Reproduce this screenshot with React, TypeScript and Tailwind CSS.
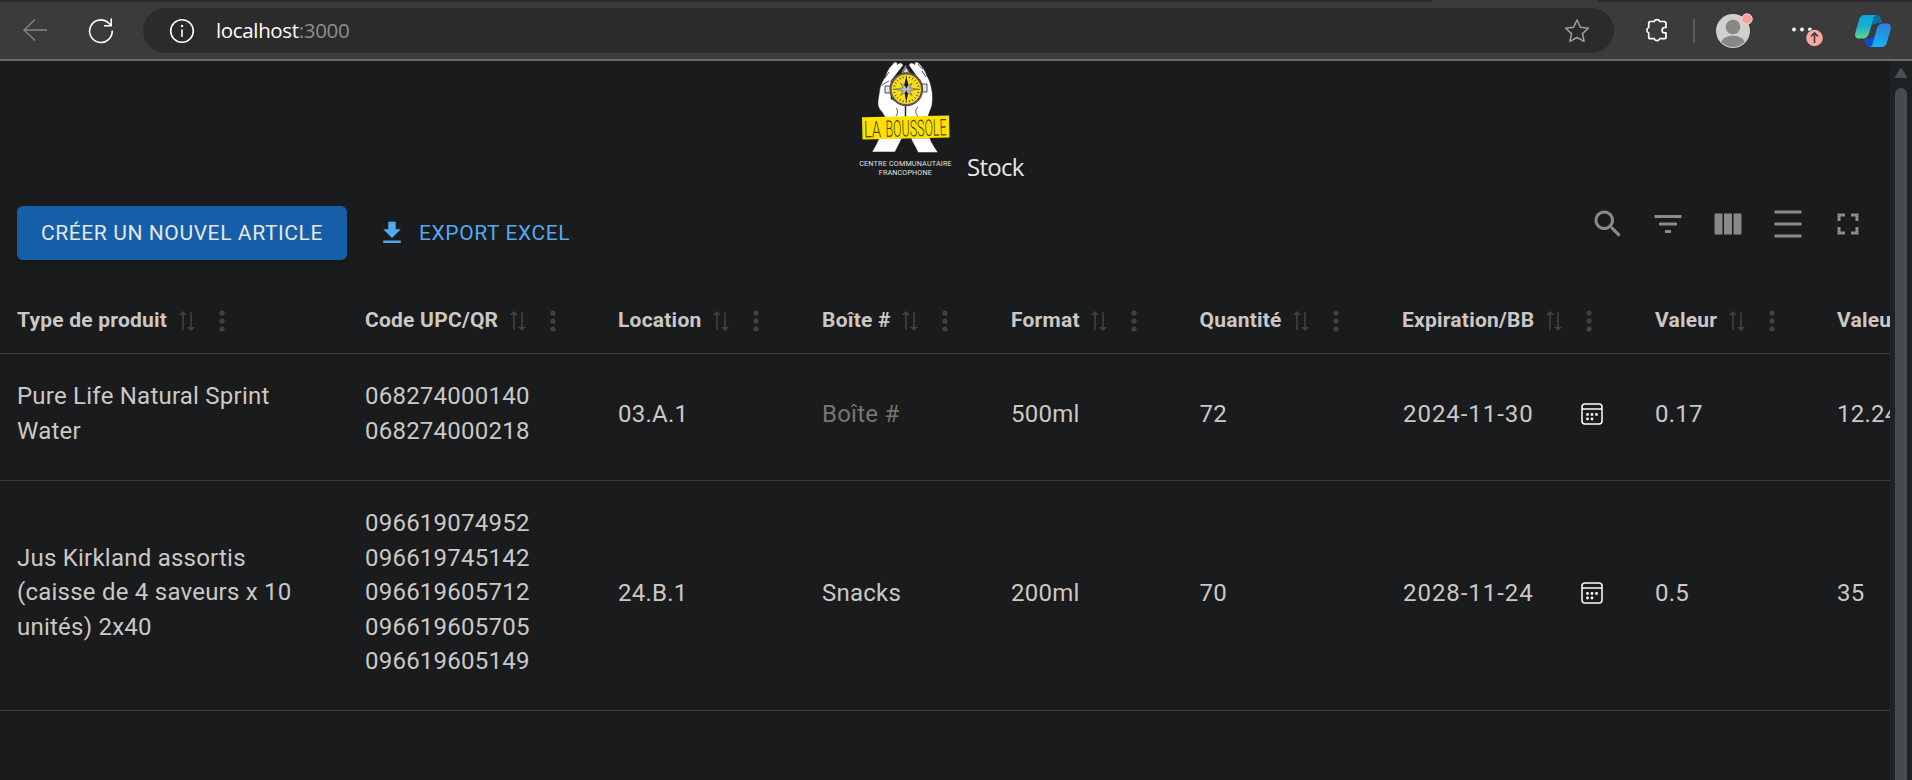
import React from "react";

const COLS =
  "grid grid-cols-[348px_253px_204px_189px_188.5px_202.5px_253px_182px_200px]";

const headers = [
  "Type de produit",
  "Code UPC/QR",
  "Location",
  "Boîte #",
  "Format",
  "Quantité",
  "Expiration/BB",
  "Valeur",
  "Valeur totale",
];

type Item = {
  product: string;
  codes: string[];
  location: string;
  box: string;
  format: string;
  quantity: string;
  expiration: string;
  value: string;
  total: string;
};

const items: Item[] = [
  {
    product: "Pure Life Natural Sprint Water",
    codes: ["068274000140", "068274000218"],
    location: "03.A.1",
    box: "",
    format: "500ml",
    quantity: "72",
    expiration: "2024-11-30",
    value: "0.17",
    total: "12.24",
  },
  {
    product: "Jus Kirkland assortis (caisse de 4 saveurs x 10 unités) 2x40",
    codes: [
      "096619074952",
      "096619745142",
      "096619605712",
      "096619605705",
      "096619605149",
    ],
    location: "24.B.1",
    box: "Snacks",
    format: "200ml",
    quantity: "70",
    expiration: "2028-11-24",
    value: "0.5",
    total: "35",
  },
];

function MuiIcon({ d, className }: { d: string; className: string }) {
  return (
    <svg viewBox="0 0 24 24" fill="currentColor" className={className}>
      <path d={d} />
    </svg>
  );
}

function BrowserBar() {
  return (
    <div className="h-[61px] shrink-0 border-b-2 border-[#6b6b6b] bg-[#3b3b3b]">
      <div className="flex h-[2px] justify-between">
        <div className="w-[1432px] bg-[#292929]" />
        <div className="w-[315px] bg-[#292929]" />
      </div>
      <div className="flex h-[57px] items-center">
        <svg viewBox="0 0 24 24" className="mb-[2px] ml-[23px] size-6 shrink-0" fill="none" stroke="#858585" strokeWidth="1.4">
          <path d="M24 12H.8M12 1.500 1 12l11 10.500" />
        </svg>
        <svg viewBox="0 0 26 26" className="ml-[41px] size-[26px] shrink-0" fill="none" stroke="#fff" strokeWidth="1.6">
          <path d="M24.2 12.5A11.3 11.3 0 1 1 19.5 4L23 7.4" />
          <path d="M23.2.5v7.2H16" />
        </svg>
        <div className="ml-[29px] flex h-[45px] w-[1471px] shrink-0 items-center rounded-full bg-[#2b2b2b]">
          <svg viewBox="0 0 26 26" className="ml-[26px] size-[26px] shrink-0" fill="none" stroke="#fff" strokeWidth="1.6">
            <circle cx="13" cy="13" r="11.3" />
            <path d="M13 11.5v7.5" />
            <circle cx="13" cy="8" r="1.2" fill="#fff" stroke="none" />
          </svg>
          <span className="mb-[2px] ml-[21px] font-['Open_Sans',sans-serif] text-[20.500px] leading-[30px] tracking-[-0.350px] text-white">
            localhost<span className="text-[#8e8e8e]">:3000</span>
          </span>
          <svg viewBox="0 0 26 26" className="mr-6 ml-auto size-[26px] shrink-0" fill="none" stroke="#a0a0a0" strokeWidth="1.5" strokeLinejoin="round">
            <path d="m13 2 3.4 7.2 8 1-5.9 5.4 1.6 7.8-7.1-3.9-7.1 3.9 1.6-7.8L1.6 10.200l8-1z" />
          </svg>
        </div>
        <svg viewBox="0 0 26 26" className="mb-px ml-[30px] size-[26px] shrink-0" fill="none" stroke="#fff" strokeWidth="1.700" strokeLinejoin="round">
          <path d="M6.500 4.500h3.700a3 3 0 0 1 5.600 0h4.400A1.800 1.800 0 0 1 22 6.300v4.200h-1.200a2.700 2.700 0 0 0 0 5.400H22v4a1.800 1.800 0 0 1-1.800 1.800h-4.400a3 3 0 0 1-5.600 0H6.500a1.800 1.800 0 0 1-1.800-1.800v-3.900a3 3 0 0 1 0-5.500V6.300a1.800 1.800 0 0 1 1.800-1.800z" />
        </svg>
        <div className="ml-[23px] h-6 w-[2px] shrink-0 bg-[#5c5c5c]" />
        <svg viewBox="0 0 40 38" className="ml-[20px] h-[38px] w-10 shrink-0">
          <defs>
            <clipPath id="avatar">
              <circle cx="18" cy="19" r="16" />
            </clipPath>
          </defs>
          <circle cx="18" cy="19" r="17" fill="#d2d0ce" />
          <g clipPath="url(#avatar)" fill="#8a8886">
            <circle cx="18" cy="15" r="7.300" />
            <ellipse cx="18" cy="33" rx="12.500" ry="9.500" />
          </g>
          <circle cx="32" cy="7" r="5.200" fill="#ff9e96" stroke="#e4e0de" strokeWidth="1" />
        </svg>
        <svg viewBox="0 0 34 30" className="mt-[3px] ml-[35px] h-[30px] w-[34px] shrink-0">
          <g fill="#fff">
            <circle cx="4" cy="12.500" r="1.900" />
            <circle cx="12" cy="12.500" r="1.900" />
            <circle cx="20" cy="12.500" r="1.900" />
          </g>
          <circle cx="24.500" cy="21" r="9" fill="#3b3b3b" />
          <circle cx="24.500" cy="21" r="8.300" fill="#f8a9a4" />
          <path d="M24.500 26v-9.500M21 19.500l3.500-3.500 3.500 3.500" fill="none" stroke="#3b3b3b" strokeWidth="1.600" />
        </svg>
        <svg viewBox="0 0 36 32" className="ml-[31px] h-8 w-9 shrink-0">
          <defs>
            <linearGradient id="cpA" x1="0" y1="0" x2="0" y2="1">
              <stop offset="0" stopColor="#0aa5e0" />
              <stop offset=".5" stopColor="#1bb0cc" />
              <stop offset="1" stopColor="#5fd98c" />
            </linearGradient>
            <linearGradient id="cpB" x1=".6" y1="0" x2=".4" y2="1">
              <stop offset="0" stopColor="#2f80e0" />
              <stop offset="1" stopColor="#16b3f5" />
            </linearGradient>
          </defs>
          <path d="M16 0h6c2.200 0 3.300 1.500 3.900 3.500L27 8h-5l-7 3z" fill="#0b6e9e" />
          <path d="M20 32h-5.500c-2.200 0-3.300-1.500-3.900-3.500L9 23.500h5l7-3z" fill="#1746d1" />
          <path d="M9.500 0H22c-2 0-3.200 1.500-3.800 3.500L14.500 17c-1.200 4-2.800 6.500-7 6.500H4c-3.500 0-4.600-2.500-3.600-6L4 5c1-3.500 2.500-5 5.500-5z" fill="url(#cpA)" />
          <path d="M26.500 32H14c2 0 3.200-1.500 3.800-3.500L21.500 15c1.200-4 2.800-6.500 7-6.500H32c3.500 0 4.600 2.500 3.600 6L32 27c-1 3.500-2.500 5-5.500 5z" fill="url(#cpB)" />
        </svg>
      </div>
    </div>
  );
}

const TICKS = [0, 15, 30, 45, 60, 75, 90, 105, 120, 135, 150, 165];

function Logo() {
  return (
    <svg viewBox="0 0 96 118" className="h-[118px] w-24">
      <g fill="#fff" stroke="#1a1b1c" strokeWidth=".5" strokeLinejoin="round">
        <path d="M36 1.500c2-1.500 4 0 3 2l1-.5c2-2 5-1 5 1.500L33 20v18l14 6v14H27c0-6-6-8-7-14-.5-5 1-9 1.500-14C22 24 25 20 27 16c2-6 5-11 9-14.500z" />
        <path d="M60 1.500c-2-1.500-4 0-3 2l-1-.5c-2-2-5-1-5 1.500L62 20v18l-14 6v14h22c0-6 3-9 4-14 .5-5 1-9 0-14-1-7-3-12-5-15-2-6-5-10-9-13.500z" />
        <path d="M21 77h23l-7 14H14c1-2 6-10 7-14z" />
        <path d="M53 77h19c1 5 6 11 8 14.500H60C58 86 54 81 53 77z" />
      </g>
      <g fill="none" stroke="#2a2a2a" strokeWidth=".8">
        <path d="M47.500 44v14M38 47c2 2 2 5 0 8M60 46c-3 3-3 6 0 9M30 7c3-2 4-3 5-5M65 8c-3-2-4-3-5-5M68 16l-4-6M27 17l4-6M24 24l7-4" />
        <path d="m43 12 4.500-8 5 8zM45 11l3-5 3 5" fill="#d4d4d4" />
        <path d="M27 25h6v7h-6zM64 23h5v8h-4" fill="#e5e5e5" />
      </g>
      <circle cx="48.300" cy="28.300" r="15.800" fill="#fbdd14" stroke="#55565a" strokeWidth="2.200" />
      <g stroke="#3a3505" strokeWidth=".8" strokeDasharray="2 22.800">
        {TICKS.map((a) => (
          <path key={a} d="M34.900 28.300h26.800" transform={`rotate(${a} 48.300 28.300)`} />
        ))}
      </g>
      <path d="m48.300 18 1.300 6.800 4.500-2.500-2.500 4.500 8 1.500-8 1.500 2.500 4.500-4.500-2.500-1.300 6.800-1.300-6.800-4.500 2.500 2.500-4.500-8-1.500 8-1.500-2.500-4.500 4.500 2.500z" fill="#b9bbc0" stroke="#4c4d50" strokeWidth=".6" />
      <path d="m48.300 15.500 2 8-2 4-2-4zM48.300 41l1.500-8-1.500-4-1.500 4z" fill="#16171a" />
      <path d="M4 56.300 91 54.500l.5 22L4.500 78.500z" fill="#ffe100" />
      <g fill="#4a420a" fontFamily="Roboto, sans-serif" fontWeight="300" transform="rotate(-1.500 48 67)">
        <text x="6" y="75.500" fontSize="23" textLength="17" lengthAdjust="spacingAndGlyphs">LA</text>
        <text x="27.500" y="75.500" fontSize="23" textLength="61" lengthAdjust="spacingAndGlyphs">BOUSSOLE</text>
      </g>
      <g fill="#e2e2e2" fontFamily="Roboto, sans-serif" fontWeight="400" fontSize="7.200">
        <text x="1.200" y="105" textLength="92.500">CENTRE COMMUNAUTAIRE</text>
        <text x="20.800" y="113.500" textLength="53">FRANCOPHONE</text>
      </g>
    </svg>
  );
}

function SortIcon() {
  return (
    <svg viewBox="0 0 16 22" className="mt-[2px] ml-[11.500px] h-[22px] w-4 shrink-0 text-[#3f4041]" fill="currentColor">
      <path d="M4 1 8 5H4.800v15H3.200V5H0zM12 21l-4-4h3.200V2h1.600v15H16z" />
    </svg>
  );
}

function HeaderCell({ label }: { label: string }) {
  return (
    <div className="flex items-center pl-[17px] whitespace-nowrap">
      <span className="text-[21px] leading-[30px] font-bold tracking-[0.225px]">{label}</span>
      <SortIcon />
      <svg viewBox="0 0 6 22" className="mt-[2px] ml-[24px] h-[22px] w-[6px] shrink-0" fill="#414243">
        <circle cx="3" cy="3" r="2.600" />
        <circle cx="3" cy="11" r="2.600" />
        <circle cx="3" cy="19" r="2.600" />
      </svg>
    </div>
  );
}

function CalendarIcon() {
  return (
    <svg viewBox="0 0 22 22" className="mb-px size-[22px]" fill="none" stroke="#fff" strokeWidth="1.500">
      <rect x="1" y="1" width="20" height="20" rx="3" />
      <path d="M1 6h20" />
      <g fill="#fff" stroke="none">
        <circle cx="6.500" cy="11.500" r="1.400" />
        <circle cx="11" cy="11.500" r="1.400" />
        <circle cx="15.500" cy="11.500" r="1.400" />
        <circle cx="6.500" cy="16" r="1.400" />
        <circle cx="11" cy="16" r="1.400" />
      </g>
    </svg>
  );
}

function Row({ item, height }: { item: Item; height: string }) {
  return (
    <div className={`${COLS} ${height} items-center border-b border-[#3b3c3d] pb-[5px] text-[24px] leading-[34.500px] tracking-[0.230px]`}>
      <div className="w-[308px] pb-[1.500px] pl-[17px]">{item.product}</div>
      <div className="pb-[1.500px] pl-[17px]">
        {item.codes.map((c) => (
          <div key={c}>{c}</div>
        ))}
      </div>
      <div className="pl-[17px]">{item.location}</div>
      <div className="pl-[17px]">{item.box || <span className="text-[#757473]">Boîte #</span>}</div>
      <div className="pl-[17px]">{item.format}</div>
      <div className="pl-[17px]">{item.quantity}</div>
      <div className="flex items-center justify-between pr-[35px] pl-[18px]">
        <span className="tracking-[0.950px]">{item.expiration}</span>
        <CalendarIcon />
      </div>
      <div className="pl-[17px]">{item.value}</div>
      <div className="pl-[17px]">{item.total}</div>
    </div>
  );
}

export default function App() {
  return (
    <div className="flex h-[780px] w-[1912px] flex-col overflow-hidden bg-[#1a1b1c] font-[Roboto,sans-serif] text-[#cbc8c5]">
      <BrowserBar />
      <div className="flex min-h-0 flex-1">
        <main className="flex w-[1890px] flex-col overflow-hidden">
          <header className="flex h-[121px] shrink-0 items-start pl-[858px]">
            <Logo />
            <span className="mt-[88px] ml-[13px] font-['Open_Sans',sans-serif] text-[24px] leading-[36px] tracking-[-0.700px] text-[#e8e6e3]">Stock</span>
          </header>
          <div className="flex h-[102px] shrink-0 items-start pl-[17px]">
            <button className="mt-6 h-[54px] w-[330px] rounded-[6px] bg-[#155fa9] pt-[2px] text-[21px] tracking-[0.600px] whitespace-nowrap text-[#e8e6e3] shadow-md">
              CRÉER UN NOUVEL ARTICLE
            </button>
            <button className="mt-6 ml-[30px] flex h-[54px] items-center pt-[2px] text-[21px] tracking-[0.600px] whitespace-nowrap text-[#52a9ef]">
              <MuiIcon d="M19 9h-4V3H9v6H5l7 7 7-7zM5 18v2h14v-2H5z" className="mr-[12px] mb-[2px] size-[30px]" />
              EXPORT EXCEL
            </button>
            <div className="mr-[24px] ml-auto flex gap-6 pt-6 text-[#8d8a86]">
              <MuiIcon className="size-9" d="M15.500 14h-.790l-.280-.270C15.410 12.590 16 11.110 16 9.500 16 5.910 13.090 3 9.500 3S3 5.910 3 9.500 5.910 16 9.500 16c1.610 0 3.090-.590 4.230-1.570l.270.280v.790l5 4.990L20.490 19l-4.990-5zm-6 0C7.010 14 5 11.990 5 9.500S7.010 5 9.500 5 14 7.010 14 9.500 11.990 14 9.500 14z" />
              <MuiIcon className="size-9" d="M10 18h4v-2h-4v2zM3 6v2h18V6H3zm3 7h12v-2H6v2z" />
              <MuiIcon className="size-9" d="M14.670 5v14H9.330V5h5.340zm1 14H21V5h-5.330v14zm-7.340 0V5H3v14h5.330z" />
              <MuiIcon className="size-9" d="M3 3h18v2H3zm0 8h18v2H3zm0 8h18v2H3z" />
              <MuiIcon className="size-9" d="M7 14H5v5h5v-2H7v-3zm-2-4h2V7h3V5H5v5zm12 7h-3v2h5v-5h-2v3zM14 5v2h3v3h2V5h-5z" />
            </div>
          </div>
          <div className={`${COLS} h-[70px] shrink-0 items-center border-b border-[#3b3c3d] pt-[3px]`}>
            {headers.map((h, i) => (
              <HeaderCell key={i} label={h} />
            ))}
          </div>
          <Row item={items[0]} height="h-[127px]" />
          <Row item={items[1]} height="h-[230px]" />
        </main>
        <div className="flex w-[22px] shrink-0 flex-col bg-[#1e2223] pl-[5px]">
          <svg viewBox="0 0 12 10" className="mt-[7px] h-[10px] w-3" fill="#4a4f51">
            <path d="M5 .8Q6-.4 7 .8L11.800 8.500Q12.200 10 11 10H1Q-.2 10 .2 8.500z" />
          </svg>
          <div className="mt-[10px] w-3 flex-1 rounded-t-full bg-[#464b4d]" />
        </div>
      </div>
    </div>
  );
}
